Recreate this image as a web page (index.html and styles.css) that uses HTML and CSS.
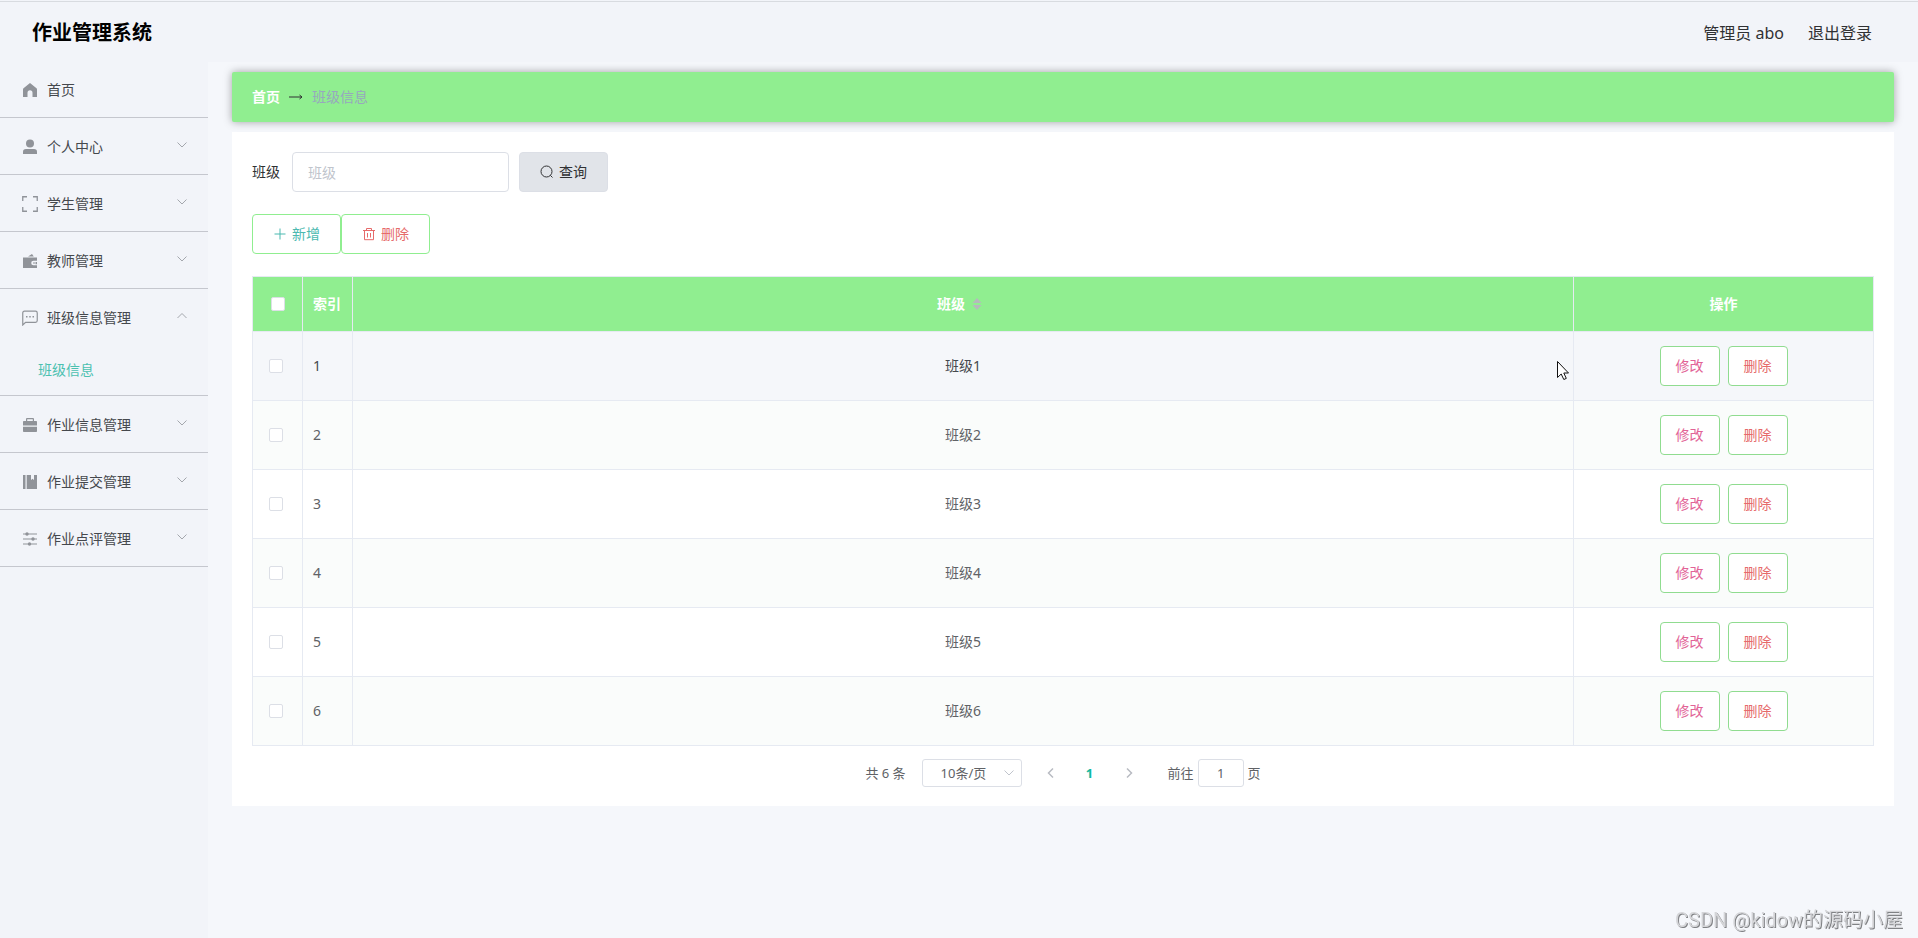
FILE: index.html
```html
<!DOCTYPE html>
<html lang="zh-CN">
<head>
<meta charset="utf-8">
<title>作业管理系统</title>
<link rel="stylesheet" href="styles.css">
</head>
<body>
<svg class="sprite" aria-hidden="true">
  <symbol id="down" viewBox="0 0 12 12"><path d="M1.500 3.500 6 8l4.500-4.500" fill="none" stroke="currentColor"/></symbol>
  <symbol id="up" viewBox="0 0 12 12"><path d="M1.500 8 6 3.500 10.500 8" fill="none" stroke="currentColor"/></symbol>
</svg>
<header class="header">
  <h1 class="brand">作业管理系统</h1>
  <div class="account"><span>管理员 abo</span><a href="#">退出登录</a></div>
</header>
<div class="layout">
  <nav class="sidebar">
    <a class="item home" href="#"><svg class="icon" viewBox="0 0 16 16"><path d="M8 1 1.500 6.200Q1 6.600 1 7.400V15h4.500v-4.200a2.500 2.500 0 0 1 5 0V15H15V7.400q0-.8-.5-1.200z" fill="currentColor"/></svg><span>首页</span></a>
    <a class="item" href="#"><svg class="icon" viewBox="0 0 16 16"><circle cx="8" cy="4.500" r="4" fill="currentColor"/><path d="M1 15v-2.200Q1 10 4 10h8q3 0 3 2.800V15z" fill="currentColor"/></svg><span>个人中心</span><svg class="arrow"><use href="#down"/></svg></a>
    <a class="item" href="#"><svg class="icon" viewBox="0 0 16 16"><path d="M.75 5V.75H5M11 .75h4.250V5M15.250 11v4.250H11M5 15.250H.75V11" fill="none" stroke="currentColor" stroke-width="1.300"/></svg><span>学生管理</span><svg class="arrow"><use href="#down"/></svg></a>
    <a class="item" href="#"><svg class="icon" viewBox="0 0 16 16"><path d="M6 3.500 10 1l1.800 2.500zM1 4.500h14v3.200h-3.500a2.300 2.300 0 0 0 0 4.600H15V15H1z" fill="currentColor"/><path d="M11.500 9h1v2h-1zM13.500 9H15v2.300h-1.500z" fill="currentColor"/></svg><span>教师管理</span><svg class="arrow"><use href="#down"/></svg></a>
    <div class="group">
      <a class="item" href="#"><svg class="icon" viewBox="0 0 16 16"><path d="M.75 15V3q0-1.800 1.800-1.800h10.900q1.800 0 1.800 1.800v7.500q0 1.800-1.800 1.800H3.600z" fill="none" stroke="currentColor" stroke-width="1.200"/><path d="M4 6h1.500v1.500H4zM7.250 6h1.500v1.500h-1.500zM10.500 6H12v1.500h-1.500z" fill="currentColor"/></svg><span>班级信息管理</span><svg class="arrow"><use href="#up"/></svg></a>
      <a class="subitem" href="#">班级信息</a>
    </div>
    <a class="item" href="#"><svg class="icon" viewBox="0 0 16 16"><path d="M1 8.500V4.800q0-.8.8-.8H4V2q0-1 1-1h6q1 0 1 1v2h2.200q.8 0 .8.8v3.700zM5.200 4h5.600V2.200H5.200zM1 9.700h14v4.500q0 .8-.8.8H1.800q-.8 0-.8-.8z" fill="currentColor" fill-rule="evenodd"/></svg><span>作业信息管理</span><svg class="arrow"><use href="#down"/></svg></a>
    <a class="item" href="#"><svg class="icon" viewBox="0 0 16 16"><path d="M1 1h2.500v14H1zM4.700 1H9v5l1.500-1.200L12 6V1h3v14H4.700z" fill="currentColor"/></svg><span>作业提交管理</span><svg class="arrow"><use href="#down"/></svg></a>
    <a class="item" href="#"><svg class="icon" viewBox="0 0 16 16"><path d="M1 3h14M1 8h14M1 13h14" stroke="currentColor" stroke-width="1.200"/><circle cx="5" cy="3" r="1.700" fill="currentColor"/><circle cx="11" cy="8" r="1.700" fill="currentColor"/><circle cx="7.500" cy="13" r="1.700" fill="currentColor"/></svg><span>作业点评管理</span><svg class="arrow"><use href="#down"/></svg></a>
  </nav>
  <main class="main">
    <nav class="crumbs" aria-label="面包屑"><a href="#">首页</a><svg class="crumb-arrow" viewBox="0 0 14 10"><path d="M0 5h13M10.500 3 13 5l-2.500 2" fill="none" stroke="currentColor"/></svg><span>班级信息</span></nav>
    <section class="card">
      <form class="search">
        <label for="cls">班级</label>
        <input class="field" id="cls" type="text" placeholder="班级">
        <button class="btn query" type="button"><svg viewBox="0 0 14 14"><circle cx="6.500" cy="6.500" r="5.500" fill="none" stroke="currentColor"/><path d="m10.300 10.300 2.200 2.200" stroke="currentColor"/></svg>查询</button>
      </form>
      <div class="actions">
        <button class="btn add" type="button"><svg viewBox="0 0 14 14"><path d="M7 1.500v11M1.500 7h11" stroke="currentColor"/></svg>新增</button>
        <button class="btn remove" type="button"><svg viewBox="0 0 14 14"><path d="M1 3.500h12M4.500 3.500v-2h5v2M2.500 3.500v9.200h9V3.500M5.500 6v4.500M8.500 6v4.500" fill="none" stroke="currentColor"/></svg>删除</button>
      </div>
      <table class="table">
        <colgroup><col class="c-check"><col class="c-index"><col><col class="c-ops"></colgroup>
        <thead><tr><th class="check"><input type="checkbox" aria-label="全选"></th><th class="index">索引</th><th>班级<svg class="sort" viewBox="0 0 10 14"><path d="M5 1 9.500 6h-9zM5 13 .5 8h9z" fill="currentColor"/></svg></th><th>操作</th></tr></thead>
        <tbody>
          <tr class="hover"><td class="check"><input type="checkbox" aria-label="选择班级1"></td><td class="index">1</td><td>班级1</td><td><div class="ops"><button class="edit" type="button">修改</button><button class="del" type="button">删除</button></div></td></tr>
          <tr><td class="check"><input type="checkbox" aria-label="选择班级2"></td><td class="index">2</td><td>班级2</td><td><div class="ops"><button class="edit" type="button">修改</button><button class="del" type="button">删除</button></div></td></tr>
          <tr><td class="check"><input type="checkbox" aria-label="选择班级3"></td><td class="index">3</td><td>班级3</td><td><div class="ops"><button class="edit" type="button">修改</button><button class="del" type="button">删除</button></div></td></tr>
          <tr><td class="check"><input type="checkbox" aria-label="选择班级4"></td><td class="index">4</td><td>班级4</td><td><div class="ops"><button class="edit" type="button">修改</button><button class="del" type="button">删除</button></div></td></tr>
          <tr><td class="check"><input type="checkbox" aria-label="选择班级5"></td><td class="index">5</td><td>班级5</td><td><div class="ops"><button class="edit" type="button">修改</button><button class="del" type="button">删除</button></div></td></tr>
          <tr><td class="check"><input type="checkbox" aria-label="选择班级6"></td><td class="index">6</td><td>班级6</td><td><div class="ops"><button class="edit" type="button">修改</button><button class="del" type="button">删除</button></div></td></tr>
        </tbody>
      </table>
      <div class="pager">
        <span>共 6 条</span>
        <span class="size"><select aria-label="每页条数"><option>10条/页</option></select><svg class="arrow"><use href="#down"/></svg></span>
        <div class="pages">
          <button type="button" aria-label="上一页"><svg viewBox="0 0 12 12"><path d="M8 1.500 3.500 6 8 10.500" fill="none" stroke="currentColor" stroke-width="1.500"/></svg></button>
          <button class="current" type="button">1</button>
          <button type="button" aria-label="下一页"><svg viewBox="0 0 12 12"><path d="M4 1.500 8.500 6 4 10.500" fill="none" stroke="currentColor" stroke-width="1.500"/></svg></button>
        </div>
        <label class="jump">前往<input type="text" value="1">页</label>
      </div>
    </section>
  </main>
</div>
<svg class="cursor" viewBox="0 0 12 19" aria-hidden="true"><path d="M.5.500v16l3.700-3.500 2.600 5.500 2.500-1.100-2.500-5.400h4.700z" fill="#fff" stroke="#111"/></svg>
<div class="watermark">CSDN @kidow的源码小屋</div>
</body>
</html>
```
FILE: styles.css
```css
* { box-sizing: border-box; }
body {
  margin: 0;
  min-height: 100vh;
  display: flex;
  flex-direction: column;
  background: #f5f7fb;
  color: #303133;
  font: 14px/20px "Noto Sans", "Noto Sans CJK SC", sans-serif;
}
a { color: inherit; text-decoration: none; }
button, input, select { font: inherit; color: inherit; margin: 0; }
svg { flex: none; }
.sprite { position: absolute; width: 0; height: 0; }

.header {
  display: flex;
  align-items: center;
  justify-content: space-between;
  height: 62px;
  padding: 4px 46px 0 32px;
  background: #f2f4f9 linear-gradient(#d8dbe0, #d8dbe0) 0 1px / 100% 1px no-repeat;
}
.brand { margin: 0; font-size: 20px; line-height: 24px; color: #000; }
.account { display: flex; gap: 24px; font-size: 16px; }

.layout { flex: 1; display: flex; }
.sidebar { width: 208px; flex: none; background: #f2f4f9; color: #45484d; }
.item {
  display: flex;
  align-items: center;
  height: 57px;
  padding: 2px 20px 0 22px;
  border-bottom: 1px solid #c5c7ce;
}
.home { height: 56px; padding-top: 0; }
.icon { width: 16px; height: 16px; margin-right: 9px; color: #909399; }
.arrow { width: 12px; height: 12px; margin-left: auto; color: #a4a7ad; }
.item .arrow { margin-bottom: 4px; }
.group { border-bottom: 1px solid #c5c7ce; }
.group .item { height: 56px; border: 0; }
.subitem { display: block; padding: 15px 38px; color: #4bc0b0; }

.main { flex: 1; min-width: 0; padding: 10px 24px; }
.crumbs {
  display: flex;
  align-items: center;
  gap: 9px;
  height: 50px;
  padding: 0 20px;
  margin-bottom: 10px;
  border-radius: 2px;
  background: #90ee90;
  box-shadow: 0 0 8px rgba(0, 0, 0, .35);
  color: #97a8be;
}
.crumbs a { font-weight: 700; color: #fff; }
.crumb-arrow { width: 14px; height: 10px; color: #303133; }

.card { padding: 20px 20px 19px; background: #fff; }
.search { display: flex; align-items: center; margin-bottom: 22px; }
.field {
  width: 217px;
  height: 40px;
  margin: 0 10px 0 12px;
  padding: 0 15px;
  border: 1px solid #dcdfe6;
  border-radius: 4px;
  outline: 0;
}
.field::placeholder { color: #c0c4cc; }
.btn {
  display: flex;
  align-items: center;
  justify-content: center;
  gap: 5px;
  width: 89px;
  height: 40px;
  padding: 0;
  border: 1px solid #90ee90;
  border-radius: 4px;
  background: #fff;
}
.btn svg { width: 14px; height: 14px; }
.query { background: #e1e4e9; border-color: #dcdfe6; }
.actions { display: flex; margin-bottom: 22px; }
.add { color: #4bb9b0; }
.remove { color: #e66a6a; }

.table { width: 100%; table-layout: fixed; border-collapse: collapse; text-align: center; color: #606266; }
.c-check, .c-index { width: 50px; }
.c-ops { width: 300px; }
th, td { padding: 0; border: 1px solid #e6eaf2; }
th { height: 55px; background: #90ee90; color: #fff; }
td { height: 69px; }
tbody tr:nth-child(even) { background: #fafcfb; }
tbody .hover { background: #f5f7fa; color: #45484d; }
.check input {
  appearance: none;
  display: block;
  width: 14px;
  height: 14px;
  margin: 0 auto 0 16px;
  border: 1px solid #dcdfe6;
  border-radius: 2px;
  background: #fff;
}
th.check input { margin-left: 18px; }
.index { padding-left: 10px; text-align: left; }
.sort { width: 10px; height: 14px; margin: 0 7px; vertical-align: -2px; color: #b6b9bd; }
.ops { display: flex; justify-content: center; gap: 8px; }
.ops button { width: 60px; height: 40px; padding: 0; border: 1px solid #90dc90; border-radius: 4px; background: #fff; }
.ops .edit { color: #e26396; }
.ops .del { color: #e66a6a; }

.pager { display: flex; justify-content: center; align-items: center; margin-top: 13px; font-size: 13px; line-height: 28px; color: #606266; }
.size { position: relative; margin: 0 14px 0 16px; display: flex; }
.size select { appearance: none; width: 100px; height: 28px; padding: 0 34px 0 18px; border: 1px solid #dcdfe6; border-radius: 3px; background: #fff; line-height: 24px; }
.size .arrow { position: absolute; right: 7px; top: 8px; color: #c0c4cc; }
.pages { display: flex; gap: 9px; margin-right: 24px; }
.pages button { display: flex; align-items: center; justify-content: center; width: 30px; height: 28px; padding: 0; border: 0; background: none; color: #b8bbc2; }
.pages svg { width: 12px; height: 12px; }
.pages .current { font-weight: 700; color: #11b99f; }
.jump input { width: 46px; height: 28px; margin: 0 4px; padding: 0; border: 1px solid #dcdfe6; border-radius: 3px; text-align: center; }

.cursor { position: absolute; left: 1557px; top: 361px; width: 12px; height: 19px; }
.watermark { position: fixed; right: 15px; bottom: 5px; font: 20px/26px Roboto, "Noto Sans CJK SC", sans-serif; color: #d4d5d8; text-shadow: 1px 1px #808285; }
```
